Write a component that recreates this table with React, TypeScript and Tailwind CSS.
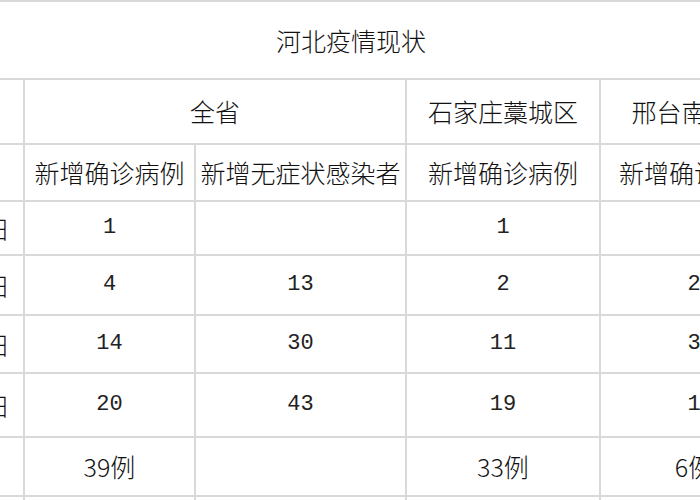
import React from "react";

const cjk = "font-['Noto_Sans_CJK_SC','Noto_Sans',sans-serif]";
const mono = "font-['Liberation_Mono','Noto_Sans_CJK_SC',monospace]";

function Cell({ children, className = "font-light text-[25px]" }: { children?: React.ReactNode; className?: string }) {
  return (
    <div className={`bg-white flex items-center justify-center text-[#111] leading-none whitespace-nowrap overflow-hidden ${className}`}>
      {children}
    </div>
  );
}

function Num({ v }: { v?: string }) {
  return <Cell className={`${mono} text-[22px] font-normal text-[#222]`}>{v ?? ""}</Cell>;
}

export default function App() {
  const dates = ["1月2日", "1月3日", "1月4日", "1月5日"];
  const rows: (string | undefined)[][] = [
    ["1", undefined, "1", undefined],
    ["4", "13", "2", "2"],
    ["14", "30", "11", "3"],
    ["20", "43", "19", "1"],
  ];
  const t = "font-light text-[25px]";
  return (
    <div className={`w-[700px] h-[500px] overflow-hidden bg-white ${cjk}`}>
      <div className="grid gap-[2px] bg-[#d9d9d9] w-max ml-[-77px] mt-[-30px] grid-cols-[100px_169px_209px_192px_186px_100px] grid-rows-[30px_76px_63px_55px_52px_58px_56px_62px_57px_40px]">
        {/* row above */}
        <Cell />
        <Cell />
        <Cell />
        <Cell />
        <Cell />
        <Cell />
        {/* title */}
        <Cell className={`${t} col-span-5 pr-[8px]`}>河北疫情现状</Cell>
        <Cell />
        {/* regions */}
        <Cell />
        <Cell className={`${t} col-span-2`}>全省</Cell>
        <Cell>石家庄藁城区</Cell>
        <Cell>邢台南宫市</Cell>
        <Cell />
        {/* sub headers */}
        <Cell />
        <Cell>新增确诊病例</Cell>
        <Cell>新增无症状感染者</Cell>
        <Cell>新增确诊病例</Cell>
        <Cell>新增确诊病例</Cell>
        <Cell />
        {rows.map((r, i) => (
          <React.Fragment key={i}>
            <Cell className={`${t} justify-end pr-[13px]`}>{dates[i]}</Cell>
            <Num v={r[0]} />
            <Num v={r[1]} />
            <Num v={r[2]} />
            <Num v={r[3]} />
            <Cell />
          </React.Fragment>
        ))}
        {/* totals */}
        <Cell />
        <Cell>39例</Cell>
        <Cell />
        <Cell>33例</Cell>
        <Cell>6例</Cell>
        <Cell />
        {/* row below */}
        <Cell />
        <Cell />
        <Cell />
        <Cell />
        <Cell />
        <Cell />
      </div>
    </div>
  );
}
